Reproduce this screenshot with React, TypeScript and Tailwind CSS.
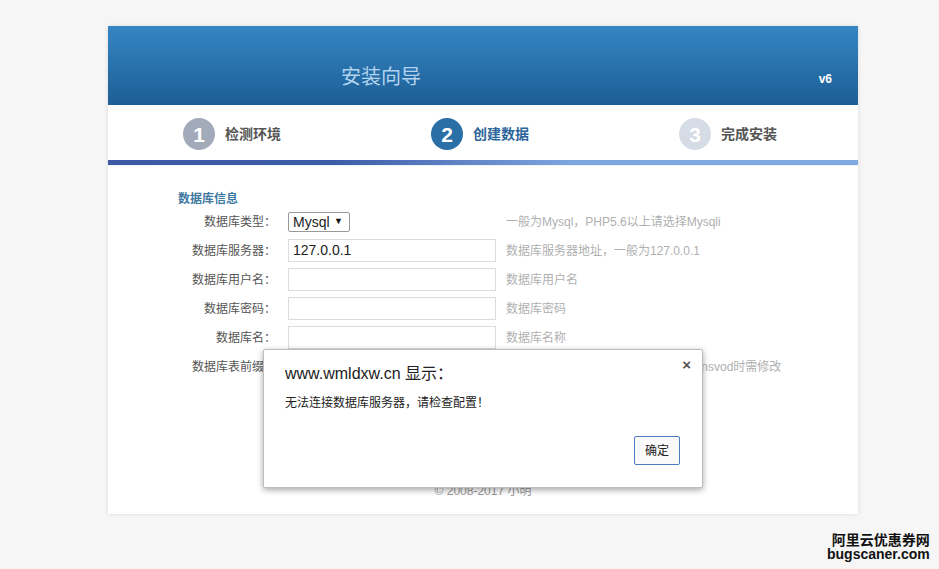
import React from "react";

const F = { fontFamily: '"Liberation Sans", "Noto Sans CJK SC", sans-serif' };

const rows: { label: string; kind: "select" | "input"; value?: string; hint: string }[] = [
  { label: "数据库类型：", kind: "select", hint: "一般为Mysql，PHP5.6以上请选择Mysqli" },
  { label: "数据库服务器：", kind: "input", value: "127.0.0.1", hint: "数据库服务器地址，一般为127.0.0.1" },
  { label: "数据库用户名：", kind: "input", value: "", hint: "数据库用户名" },
  { label: "数据库密码：", kind: "input", value: "", hint: "数据库密码" },
  { label: "数据库名：", kind: "input", value: "", hint: "数据库名称" },
  { label: "数据库表前缀：", kind: "input", value: "mac_", hint: "默认为mac_，同一数据库安装多个mnsvod时需修改" },
];

function Step({ n, text, circle, color }: { n: string; text: string; circle: string; color: string }) {
  return (
    <div className="flex w-[248px] shrink-0 items-center">
      <div className={`flex h-[32px] w-[32px] shrink-0 items-center justify-center rounded-full ${circle}`}>
        <span className="text-[21px] font-bold leading-none text-white" style={{ fontFamily: '"Liberation Sans", sans-serif' }}>
          {n}
        </span>
      </div>
      <span className={`ml-[10px] whitespace-nowrap text-[14px] font-bold ${color}`}>{text}</span>
    </div>
  );
}

export default function App() {
  return (
    <div className="relative h-[569px] w-[939px] overflow-hidden bg-[#f6f6f6] pl-[108px] pt-[26px]" style={F}>
      <div className="flex h-[488px] w-[750px] flex-col overflow-hidden bg-white shadow-[0_0_4px_rgba(0,0,0,0.12)]">
        <div className="flex h-[79px] items-end justify-between bg-gradient-to-b from-[#3586c4] to-[#1d5e95] pb-[14px] pl-[233px] pr-[26px]">
          <span className="text-[20px] leading-[28px] text-[#b2d3f0]">安装向导</span>
          <span className="pb-[3px] text-[12px] font-bold text-white">v6</span>
        </div>
        <div className="flex h-[55px] items-start pl-[75px] pt-[13px]">
          <Step n="1" text="检测环境" circle="bg-[#a3abbb]" color="text-[#555]" />
          <Step n="2" text="创建数据" circle="bg-[#2b6fa7]" color="text-[#2b659a]" />
          <Step n="3" text="完成安装" circle="bg-[#d6dce5]" color="text-[#555]" />
        </div>
        <div className="h-[5px] bg-[linear-gradient(to_right,#3b59a5_0%,#3d5ca8_30%,#7ea6e0_62%,#80a8e1_100%)]" />
        <div className="h-[1px] bg-[#eef2f7]" />
        <div className="flex flex-1 flex-col pt-[25px]">
          <div className="ml-[70px] text-[12px] font-bold leading-[16px] text-[#40789f]">数据库信息</div>
          <div className="mt-[3px] flex flex-col gap-[6px]">
            {rows.map((r) => (
              <div key={r.label} className="flex h-[23px] items-center">
                <div className="w-[168px] text-right text-[12px] text-[#555]">{r.label}</div>
                <div className="ml-[12px] w-[208px]">
                  {r.kind === "select" ? (
                    <div className="flex h-[20px] w-[62px] items-center justify-between rounded-[2px] border border-[#9a9a9a] bg-white pl-[4px] pr-[6px]">
                      <span className="text-[14px] leading-none text-[#222]">Mysql</span>
                      <span className="text-[9px] leading-none text-[#111]">▼</span>
                    </div>
                  ) : (
                    <div className="flex h-[23px] w-[208px] items-center border border-[#dcdcdc] bg-white pl-[4px] text-[14px] text-[#222]">
                      {r.value}
                    </div>
                  )}
                </div>
                <div className="ml-[10px] whitespace-nowrap text-[12px] text-[#b0b0b0]">{r.hint}</div>
              </div>
            ))}
          </div>
          <div className="mt-auto pb-[15px] text-center text-[12px] leading-[16px] text-[#999]">© 2008-2017 小明</div>
        </div>
      </div>

      <div className="absolute left-[263px] top-[349px] flex h-[139px] w-[440px] flex-col rounded-[2px] border border-[#bdbdbd] bg-white pl-[21px] pr-[22px] shadow-[0_2px_6px_rgba(0,0,0,0.35)]">
        <div className="pt-[13px] text-[16px] leading-[22px] text-[#222]">www.wmldxw.cn 显示：</div>
        <div className="mt-[10px] text-[12px] leading-[16px] text-[#222]">无法连接数据库服务器，请检查配置！</div>
        <div className="mt-auto flex justify-end pb-[22px]">
          <div className="flex h-[29px] w-[46px] items-center justify-center rounded-[2px] border border-[#4c7bc4] bg-[#fafafa] text-[12px] text-[#222]">
            确定
          </div>
        </div>
        <div className="absolute right-[11px] top-[7px] text-[15px] font-bold leading-none text-[#555]">×</div>
      </div>

      <div className="absolute left-[827px] top-[532px] flex flex-col items-end text-[14px] font-bold leading-[15px] text-[#111]">
        <span style={{ fontFamily: '"Noto Sans CJK SC", sans-serif' }}>阿里云优惠券网</span>
        <span style={{ fontFamily: '"Liberation Sans", sans-serif' }}>bugscaner.com</span>
      </div>
    </div>
  );
}
